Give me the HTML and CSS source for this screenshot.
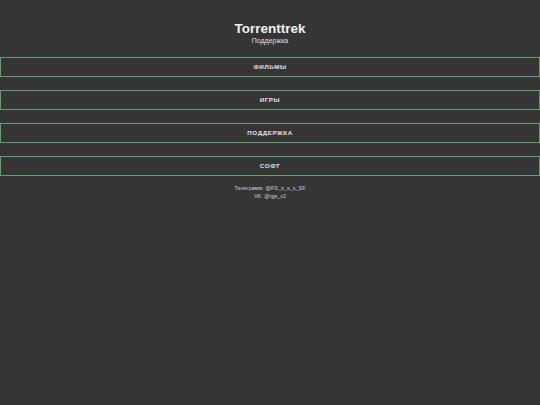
FILE: index.html
```html
<!DOCTYPE html>
<html lang="ru">
<head>
    <meta charset="UTF-8">
    <meta name="viewport" content="width=device-width, initial-scale=1.0">
    <title>Torrenttrek – Поддержка</title>
    <link rel="stylesheet" href="styles.css">
</head>
<body>
    <header class="header">
        <h1>Torrenttrek</h1>
        <p class="subtitle">Поддержка</p>
    </header>

    <nav class="menu">
        <a class="menu-item" href="#">Фильмы</a>
        <a class="menu-item" href="#">Игры</a>
        <a class="menu-item" href="#">Поддержка</a>
        <a class="menu-item" href="#">Софт</a>
    </nav>

    <footer class="footer">
        <div class="dash">-</div>
        <p>Телеграмм: @FS_s_s_s_SF</p>
        <p>VK: @tgs_v2</p>
    </footer>
</body>
</html>
```

FILE: styles.css
```css
body {
    font-family: "Liberation Sans", Arial, sans-serif;
    background-color: #353535;
    color: #e6e6e6;
    margin: 0;
    padding: 0;
}
.header {
    text-align: center;
    padding-top: 21px;
}
.header h1 {
    font-size: 13.5px;
    font-weight: bold;
    color: #f2f2f2;
    margin: 0;
    line-height: 15px;
}
.subtitle {
    font-size: 7px;
    color: #dddddd;
    margin: 0;
    line-height: 9px;
}
.menu {
    display: flex;
    flex-direction: column;
    gap: 13px;
    margin-top: 12px;
}
.menu-item {
    display: block;
    height: 18px;
    line-height: 18px;
    border: 1px solid #6a9c74;
    text-align: center;
    text-transform: uppercase;
    text-decoration: none;
    font-size: 6.2px;
    font-weight: bold;
    letter-spacing: 0.6px;
    color: #e4e4e4;
}
.footer {
    text-align: center;
    font-size: 5.5px;
    color: #cfcfcf;
    margin-top: 2px;
}
.footer .dash {
    line-height: 7px;
    color: #9a9a9a;
}
.footer p {
    margin: 0;
    line-height: 7.5px;
}
```
